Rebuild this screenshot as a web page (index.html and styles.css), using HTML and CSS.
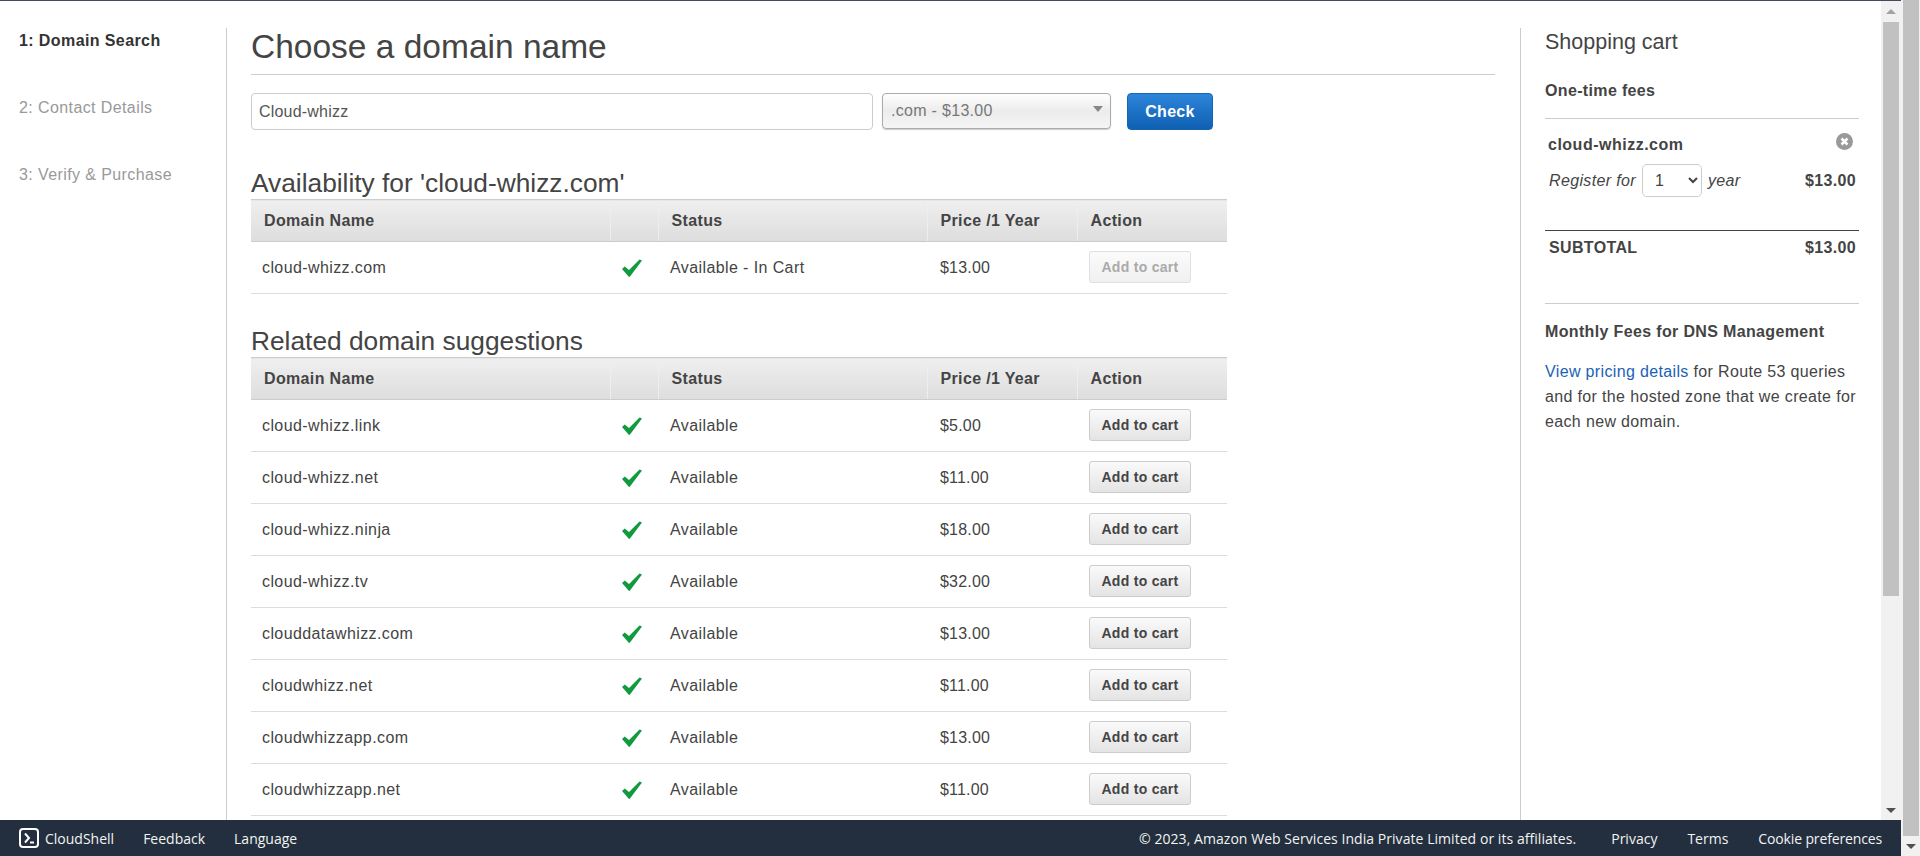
FILE: index.html
```html
<!DOCTYPE html>
<html lang="en">
<head>
  <meta charset="UTF-8">
  <title>Route 53 - Choose a domain name</title>
  <link rel="stylesheet" href="styles.css">
</head>
<body>
  <svg class="defs" width="0" height="0">
    <symbol id="tick" viewBox="0 0 20 18">
      <path d="M0 10 L2.8 7.5 L7 11 L17.5 0.5 L20 1.5 L8 17.5 L7 18 Z" fill="#119a3f"/>
    </symbol>
  </svg>

  <div class="window">
    <div class="top-line"></div>
    <div class="window-body">
      <div class="content">
        <nav class="steps">
          <p class="step step-current">1: Domain Search</p>
          <p class="step">2: Contact Details</p>
          <p class="step">3: Verify &amp; Purchase</p>
        </nav>

        <main class="main">
          <h1 class="page-title">Choose a domain name</h1>
          <form class="search-form">
            <input class="domain-input" type="text" value="Cloud-whizz">
            <div class="tld-select">.com - $13.00<span class="tld-arrow"></span></div>
            <button class="check-btn" type="button">Check</button>
          </form>

          <h2 class="section-title">Availability for 'cloud-whizz.com'</h2>
          <table class="domain-table">
            <thead>
              <tr><th>Domain Name</th><th></th><th>Status</th><th>Price /1 Year</th><th>Action</th></tr>
            </thead>
            <tbody>
              <tr>
                <td>cloud-whizz.com</td>
                <td><svg class="tick"><use href="#tick"/></svg></td>
                <td>Available - In Cart</td>
                <td>$13.00</td>
                <td class="action-cell"><button class="cart-btn" type="button" disabled>Add to cart</button></td>
              </tr>
            </tbody>
          </table>

          <h2 class="section-title section-related">Related domain suggestions</h2>
          <table class="domain-table">
            <thead>
              <tr><th>Domain Name</th><th></th><th>Status</th><th>Price /1 Year</th><th>Action</th></tr>
            </thead>
            <tbody>
              <tr><td>cloud-whizz.link</td><td><svg class="tick"><use href="#tick"/></svg></td><td>Available</td><td>$5.00</td><td class="action-cell"><button class="cart-btn" type="button">Add to cart</button></td></tr>
              <tr><td>cloud-whizz.net</td><td><svg class="tick"><use href="#tick"/></svg></td><td>Available</td><td>$11.00</td><td class="action-cell"><button class="cart-btn" type="button">Add to cart</button></td></tr>
              <tr><td>cloud-whizz.ninja</td><td><svg class="tick"><use href="#tick"/></svg></td><td>Available</td><td>$18.00</td><td class="action-cell"><button class="cart-btn" type="button">Add to cart</button></td></tr>
              <tr><td>cloud-whizz.tv</td><td><svg class="tick"><use href="#tick"/></svg></td><td>Available</td><td>$32.00</td><td class="action-cell"><button class="cart-btn" type="button">Add to cart</button></td></tr>
              <tr><td>clouddatawhizz.com</td><td><svg class="tick"><use href="#tick"/></svg></td><td>Available</td><td>$13.00</td><td class="action-cell"><button class="cart-btn" type="button">Add to cart</button></td></tr>
              <tr><td>cloudwhizz.net</td><td><svg class="tick"><use href="#tick"/></svg></td><td>Available</td><td>$11.00</td><td class="action-cell"><button class="cart-btn" type="button">Add to cart</button></td></tr>
              <tr><td>cloudwhizzapp.com</td><td><svg class="tick"><use href="#tick"/></svg></td><td>Available</td><td>$13.00</td><td class="action-cell"><button class="cart-btn" type="button">Add to cart</button></td></tr>
              <tr><td>cloudwhizzapp.net</td><td><svg class="tick"><use href="#tick"/></svg></td><td>Available</td><td>$11.00</td><td class="action-cell"><button class="cart-btn" type="button">Add to cart</button></td></tr>
            </tbody>
          </table>
        </main>

        <aside class="cart">
          <h2 class="cart-title">Shopping cart</h2>
          <h3 class="cart-heading">One-time fees</h3>
          <div class="cart-item">
            <div class="cart-row">
              <strong class="cart-domain">cloud-whizz.com</strong>
              <svg class="remove-icon" viewBox="0 0 16 16">
                <circle cx="8" cy="8" r="8" fill="#999"/>
                <path d="M5.2 5.2 L10.8 10.8 M10.8 5.2 L5.2 10.8" stroke="#fff" stroke-width="2.4"/>
              </svg>
            </div>
            <div class="cart-row cart-term">
              <span class="term-label"><em>Register for</em>
                <select class="year-select"><option>1</option></select>
                <em>year</em></span>
              <strong>$13.00</strong>
            </div>
          </div>
          <div class="cart-row cart-total">
            <strong>SUBTOTAL</strong>
            <strong>$13.00</strong>
          </div>
          <h3 class="cart-heading cart-monthly">Monthly Fees for DNS Management</h3>
          <p class="cart-note"><a href="#">View pricing details</a> for Route 53 queries and for the hosted zone that we create for each new domain.</p>
        </aside>
      </div>

      <div class="scrollbar scrollbar-inner">
        <span class="arrow-up"></span>
        <div class="thumb"></div>
        <span class="arrow-down"></span>
      </div>
    </div>

    <footer class="console-footer">
      <div class="footer-group">
        <span class="footer-shell">
          <svg class="shell-icon" viewBox="0 0 20 20">
            <rect x="1" y="1" width="18" height="18" rx="3" fill="none" stroke="#fff" stroke-width="2"/>
            <path d="M6 5.5 L10 10 L6 14.5" fill="none" stroke="#fff" stroke-width="2"/>
            <path d="M11 14.5 H15" stroke="#fff" stroke-width="2"/>
          </svg>
          CloudShell
        </span>
        <span>Feedback</span>
        <span>Language</span>
      </div>
      <div class="footer-group footer-right">
        <span class="footer-copy">&copy; 2023, Amazon Web Services India Private Limited or its affiliates.</span>
        <span>Privacy</span>
        <span>Terms</span>
        <span class="footer-cookie">Cookie preferences</span>
      </div>
    </footer>
  </div>

  <div class="scrollbar scrollbar-outer">
    <div class="thumb"></div>
    <span class="arrow-down"></span>
  </div>
</body>
</html>
```
FILE: styles.css
```css
* { box-sizing: border-box; }
body { margin: 0; height: 856px; overflow: hidden; display: flex; background: #fff; color: #444; font-family: "Liberation Sans", Arial, sans-serif; font-size: 16px; }
.defs { position: absolute; }

.window { flex: 1; min-width: 0; display: flex; flex-direction: column; }
.top-line { height: 1px; background: #414b5a; flex: none; }
.window-body { flex: 1; min-height: 0; display: flex; }
.content { flex: 1; min-width: 0; display: flex; padding-top: 27px; overflow: hidden; }

/* left steps */
.steps { width: 227px; flex: none; border-right: 1px solid #ccc; padding: 3px 0 0 19px; }
.step { margin: 0 0 47px; line-height: 20px; height: 20px; color: #999; font-size: 16px; letter-spacing: 0.4px; }
.step-current { color: #333; font-weight: bold; }

/* middle column */
.main { width: 1293px; flex: none; padding: 0 25px 0 24px; }
.page-title { margin: 0; height: 47px; font-size: 33.5px; line-height: 38px; font-weight: normal; color: #444; border-bottom: 1px solid #ccc; }
.search-form { display: flex; align-items: flex-start; margin-top: 18px; }
.domain-input { width: 622px; height: 37px; padding: 0 7px; border: 1px solid #ccc; border-radius: 4px; color: #555; font: inherit; letter-spacing: 0.2px; }
.tld-select { position: relative; width: 229px; height: 36px; margin-left: 9px; padding: 0 8px; border: 1px solid #aaa; border-radius: 4px; line-height: 33px; color: #777; background: linear-gradient(#fff, #ececec 50%, #f5f5f5); box-shadow: 0 1px 1px #ccc; letter-spacing: 0.3px; }
.tld-arrow { position: absolute; right: 7px; top: 12px; border: 5px solid transparent; border-top: 6px solid #888; border-bottom: 0; }
.check-btn { width: 86px; height: 37px; margin-left: 16px; border: 1px solid #1766b5; border-radius: 4px; background: linear-gradient(#2d85d9, #0f60b3); color: #fff; font: bold 16px "Liberation Sans", Arial, sans-serif; letter-spacing: 0.3px; }

.section-title { margin: 0; font-size: 26.3px; line-height: 32px; font-weight: normal; color: #444; padding-top: 37px; }
.section-related { padding-top: 31px; }
.domain-table { width: 976px; table-layout: fixed; border-collapse: collapse; }
.domain-table th:nth-child(1) { width: 359px; }
.domain-table th:nth-child(2) { width: 48px; }
.domain-table th:nth-child(3) { width: 269px; }
.domain-table th:nth-child(4) { width: 150px; }
.domain-table th:nth-child(5) { width: 150px; }
.domain-table th { height: 42px; padding: 0 0 0 13px; text-align: left; font-size: 16px; letter-spacing: 0.35px; color: #444; background: linear-gradient(#efefef, #ddd); border-top: 1px solid #ccc; border-bottom: 1px solid #ccc; border-left: 1px solid #eee; }
.domain-table th:first-child { border-left: 0; }
.domain-table td { height: 52px; padding: 0 0 0 12px; border-bottom: 1px solid #ddd; color: #444; letter-spacing: 0.4px; }
.domain-table td:first-child { padding-left: 11px; }
.domain-table td:nth-child(4) { padding-left: 13px; letter-spacing: 0.2px; }
.domain-table .action-cell { padding-bottom: 1px; }
.tick { display: block; width: 20px; height: 18px; }
.cart-btn { display: block; width: 102px; height: 32px; padding: 0; border: 1px solid #ccc; border-radius: 3px; background: linear-gradient(#fafafa, #e4e4e4); color: #444; font: bold 14px "Liberation Sans", Arial, sans-serif; letter-spacing: 0.3px; }
.cart-btn:disabled { background: linear-gradient(#fbfbfb, #f0f0f0); border-color: #e0e0e0; color: #aaa; }

/* shopping cart */
.cart { width: 339px; flex: none; padding-left: 24px; border-left: 1px solid #ccc; letter-spacing: 0.35px; }
.cart-title { margin: 0; font-size: 21.5px; line-height: 28px; font-weight: normal; letter-spacing: 0; }
.cart-heading { margin: 0; font-size: 16px; line-height: 20px; font-weight: bold; }
.cart-title + .cart-heading { margin-top: 25px; padding-bottom: 17px; border-bottom: 1px solid #ccc; }
.cart-row { display: flex; justify-content: space-between; align-items: center; padding: 0 3px 0 3px; }
.cart-domain { letter-spacing: 0.5px; }
.cart-item { padding: 17px 0 33px; border-bottom: 1px solid #444; }
.remove-icon { width: 17px; height: 17px; margin-top: -8px; margin-right: 3px; }
.cart-term { margin-top: 10px; height: 33px; padding-left: 4px; }
.term-label { display: flex; align-items: center; gap: 6px; color: #444; }
.year-select { width: 60px; height: 33px; padding-left: 8px; border: 1px solid #ccc; border-radius: 5px; background: #fff; color: #444; font: inherit; }
.cart-total { height: 73px; padding: 7px 3px 0 4px; align-items: flex-start; border-bottom: 1px solid #ccc; line-height: 20px; }
.cart-monthly { margin-top: 18px; }
.cart-note { margin: 17px 0 0; line-height: 25px; }
.cart-note a { color: #1a62b5; text-decoration: none; }

/* fake scrollbars, the screenshot has two */
.scrollbar { display: flex; flex-direction: column; flex: none; background: #f1f1f1; }
.scrollbar-inner { width: 20px; padding: 0 2px; }
.scrollbar-outer { width: 19px; padding: 0 1px 0 2px; }
.scrollbar .thumb { background: #c1c1c1; flex: none; }
.scrollbar-inner .thumb { height: 574px; margin-top: 8px; }
.scrollbar-outer .thumb { height: 836px; }
.arrow-up { margin: 8px auto 0; border: 5px solid transparent; border-bottom: 5px solid #a3a3a3; border-top: 0; width: 0; }
.arrow-down { border: 5px solid transparent; border-top: 5px solid #505050; border-bottom: 0; width: 0; margin: 0 auto; }
.scrollbar-inner .arrow-down { margin-top: 212px; }
.scrollbar-outer .arrow-down { margin-top: 8px; }

/* console footer */
.console-footer { flex: none; height: 36px; display: flex; justify-content: space-between; align-items: center; padding: 0 19px; background: #232f3e; color: #f2f3f3; font-family: "Open Sans", Roboto, sans-serif; font-size: 14px; }
.footer-group { display: flex; align-items: center; gap: 29px; }
.footer-right { gap: 30px; }
.footer-shell { display: flex; align-items: center; gap: 6px; }
.shell-icon { width: 20px; height: 20px; }
.footer-copy { margin-right: 5px; letter-spacing: 0.05px; }
.footer-cookie { letter-spacing: -0.14px; }
```
